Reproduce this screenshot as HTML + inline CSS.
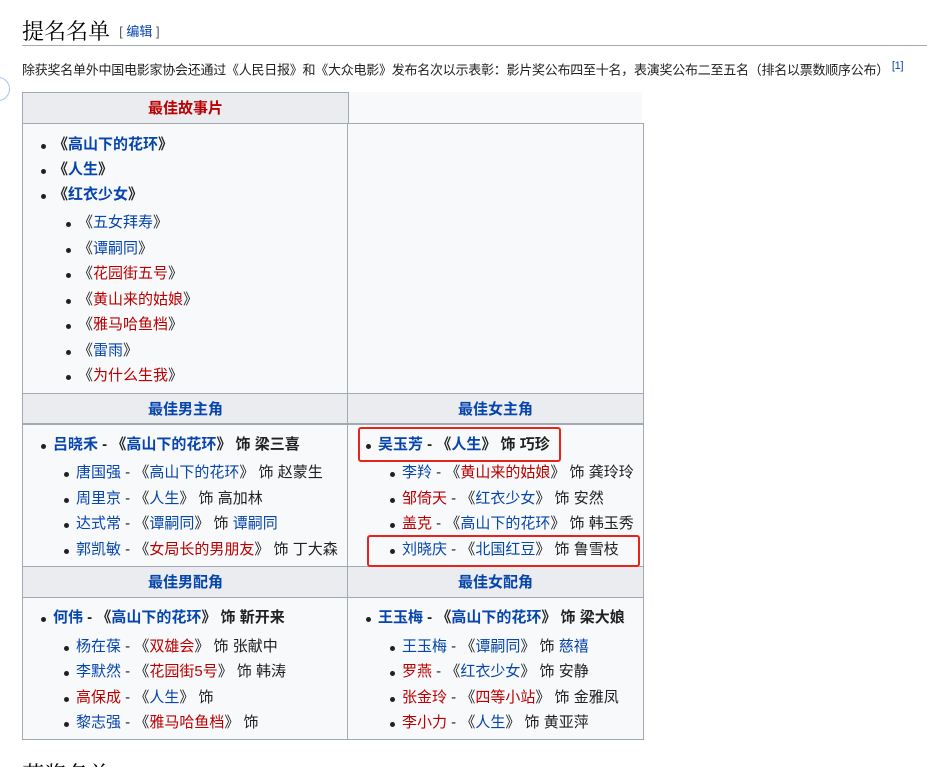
<!DOCTYPE html>
<html style="height:767px;overflow:hidden"><head><meta charset="utf-8"><style>
html,body{overflow:hidden}
body{margin:0;width:927px;height:767px;overflow:hidden;background:#fff;font-family:"Liberation Sans","Noto Sans CJK SC",sans-serif;color:#202122;position:relative}
.a{position:absolute;white-space:nowrap}
.b{color:#0645ad}.r{color:#ba0000}
.li{position:absolute;white-space:nowrap;font-size:15px;height:20px;line-height:20px}
.li:before{content:"";position:absolute;left:-12px;top:9px;width:5px;height:5px;border-radius:50%;background:#202122}
.bold{font-weight:bold}
.box{position:absolute;border:1px solid #a2a9b1;background:#f8f9fa}
.hd{position:absolute;background:#eaecf0;border:1px solid #a2a9b1;font-weight:bold;font-size:15px;text-align:center;color:#0645ad}
.red{position:absolute;border:2px solid #e8231b;border-radius:3px}
</style></head><body>
<div class="a" style="left:22px;top:15px;font-size:22px;font-family:'Liberation Serif','Noto Serif CJK SC',serif;color:#000">提名名单 <span style="font-size:13px;font-family:'Liberation Sans','Noto Sans CJK SC',sans-serif;color:#54595d;vertical-align:3px">&nbsp;[ <span class="b">编辑</span> ]</span></div>
<div style="position:absolute;left:22px;top:45px;width:905px;height:1px;background:#a2a9b1"></div>
<div class="a" style="left:22px;top:57px;font-size:13px;line-height:18px;letter-spacing:-0.25px">除获奖名单外中国电影家协会还通过《人民日报》和《大众电影》发布名次以示表彰：影片奖公布四至十名，表演奖公布二至五名（排名以票数顺序公布）<sup style="font-size:11px;color:#0645ad"> [1]</sup></div>
<div style="position:absolute;left:-14px;top:77px;width:22px;height:22px;border:1px solid #a8c4f0;border-radius:50%"></div>

<div class="box" style="left:22px;top:92px;width:620px;height:646px;border:none;background:#f8f9fa"></div>
<div class="box" style="left:22px;top:92px;width:325px;height:646px"></div>
<div class="box" style="left:347px;top:123px;width:295px;height:615px"></div>
<div class="hd r" style="left:22px;top:92px;width:325px;height:30px;line-height:32px;color:#ba0000">最佳故事片</div>
<div class="hd" style="left:22px;top:393px;width:325px;height:30px;line-height:32px">最佳男主角</div>
<div class="hd" style="left:347px;top:393px;width:295px;height:30px;line-height:32px">最佳女主角</div>
<div class="box" style="left:22px;top:423px;width:620px;height:143px;background:transparent"></div>
<div class="hd" style="left:22px;top:566px;width:325px;height:30px;line-height:32px">最佳男配角</div>
<div class="hd" style="left:347px;top:566px;width:295px;height:30px;line-height:32px">最佳女配角</div>
<div style="position:absolute;left:347px;top:393px;width:1px;height:346px;background:#a2a9b1"></div>

<div class="li bold" style="left:53px;top:135px">《<span class="b">高山下的花环</span>》</div>
<div class="li bold" style="left:53px;top:160px">《<span class="b">人生</span>》</div>
<div class="li bold" style="left:53px;top:185px">《<span class="b">红衣少女</span>》</div>
<div class="li" style="left:78px;top:213px">《<span class="b">五女拜寿</span>》</div>
<div class="li" style="left:78px;top:239px">《<span class="b">谭嗣同</span>》</div>
<div class="li" style="left:78px;top:264px">《<span class="r">花园街五号</span>》</div>
<div class="li" style="left:78px;top:290px">《<span class="r">黄山来的姑娘</span>》</div>
<div class="li" style="left:78px;top:315px">《<span class="r">雅马哈鱼档</span>》</div>
<div class="li" style="left:78px;top:341px">《<span class="b">雷雨</span>》</div>
<div class="li" style="left:78px;top:366px">《<span class="r">为什么生我</span>》</div>

<div class="li bold" style="left:53px;top:435px"><span class="b">吕晓禾</span> - 《<span class="b">高山下的花环</span>》 饰 梁三喜</div>
<div class="li" style="left:76px;top:463px"><span class="b">唐国强</span> - 《<span class="b">高山下的花环</span>》 饰 赵蒙生</div>
<div class="li" style="left:76px;top:489px"><span class="b">周里京</span> - 《<span class="b">人生</span>》 饰 高加林</div>
<div class="li" style="left:76px;top:514px"><span class="b">达式常</span> - 《<span class="b">谭嗣同</span>》 饰 <span class="b">谭嗣同</span></div>
<div class="li" style="left:76px;top:540px"><span class="b">郭凯敏</span> - 《<span class="r">女局长的男朋友</span>》 饰 丁大森</div>

<div class="li bold" style="left:378px;top:435px"><span class="b">吴玉芳</span> - 《<span class="b">人生</span>》 饰 巧珍</div>
<div class="li" style="left:402px;top:463px"><span class="b">李羚</span> - 《<span class="r">黄山来的姑娘</span>》 饰 龚玲玲</div>
<div class="li" style="left:402px;top:489px"><span class="r">邹倚天</span> - 《<span class="b">红衣少女</span>》 饰 安然</div>
<div class="li" style="left:402px;top:514px"><span class="r">盖克</span> - 《<span class="b">高山下的花环</span>》 饰 韩玉秀</div>
<div class="li" style="left:402px;top:540px"><span class="b">刘晓庆</span> - 《<span class="b">北国红豆</span>》 饰 鲁雪枝</div>
<div class="red" style="left:358px;top:427px;width:199px;height:31px"></div>
<div class="red" style="left:367px;top:535px;width:269px;height:28px"></div>

<div class="li bold" style="left:53px;top:608px"><span class="b">何伟</span> - 《<span class="b">高山下的花环</span>》 饰 靳开来</div>
<div class="li" style="left:76px;top:637px"><span class="b">杨在葆</span> - 《<span class="r">双雄会</span>》 饰 张献中</div>
<div class="li" style="left:76px;top:662px"><span class="b">李默然</span> - 《<span class="r">花园街5号</span>》 饰 韩涛</div>
<div class="li" style="left:76px;top:688px"><span class="r">高保成</span> - 《<span class="b">人生</span>》 饰</div>
<div class="li" style="left:76px;top:713px"><span class="b">黎志强</span> - 《<span class="r">雅马哈鱼档</span>》 饰</div>

<div class="li bold" style="left:378px;top:608px"><span class="b">王玉梅</span> - 《<span class="b">高山下的花环</span>》 饰 梁大娘</div>
<div class="li" style="left:402px;top:637px"><span class="b">王玉梅</span> - 《<span class="b">谭嗣同</span>》 饰 <span class="b">慈禧</span></div>
<div class="li" style="left:402px;top:662px"><span class="r">罗燕</span> - 《<span class="b">红衣少女</span>》 饰 安静</div>
<div class="li" style="left:402px;top:688px"><span class="r">张金玲</span> - 《<span class="r">四等小站</span>》 饰 金雅凤</div>
<div class="li" style="left:402px;top:713px"><span class="r">李小力</span> - 《<span class="b">人生</span>》 饰 黄亚萍</div>

<div class="a" style="left:22px;top:763px;height:4px;overflow:hidden;font-size:22px;line-height:30px;font-family:'Liberation Serif','Noto Serif CJK SC',serif;color:#000"><div style="margin-top:-3px">获奖名单</div></div>
</body></html>
